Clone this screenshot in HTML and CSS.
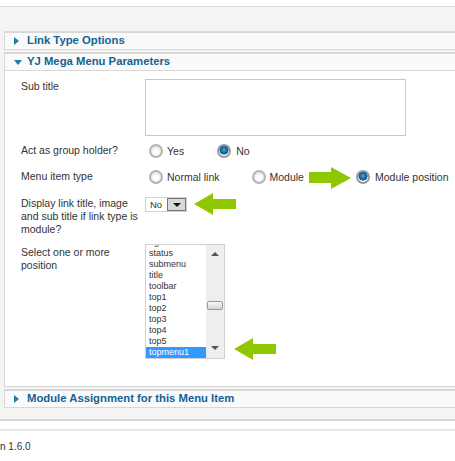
FILE: index.html
```html
<!DOCTYPE html>
<html lang="en">
<head>
  <meta charset="UTF-8">
  <title>YJ Mega Menu Parameters</title>
  <link rel="stylesheet" href="styles.css">
</head>
<body>
  <div class="content">
    <div class="panel">
      <h3 class="panel-title"><span class="caret-right"></span>Link Type Options</h3>
    </div>

    <div class="panel">
      <h3 class="panel-title"><span class="caret-down"></span>YJ Mega Menu Parameters</h3>
      <div class="panel-body">
        <div class="row row-subtitle">
          <div class="label label-subtitle">Sub title</div>
          <div class="textarea"></div>
        </div>

        <div class="row row-group">
          <div class="label">Act as group holder?</div>
          <div class="radios">
            <span class="radio"></span><span class="radio-text gap-yes">Yes</span>
            <span class="radio on"></span><span class="radio-text">No</span>
          </div>
        </div>

        <div class="row row-type">
          <div class="label">Menu item type</div>
          <div class="radios">
            <span class="radio"></span><span class="radio-text gap-normal">Normal link</span>
            <span class="radio"></span><span class="radio-text gap-module">Module</span>
            <span class="radio on"></span><span class="radio-text">Module position</span>
          </div>
        </div>

        <div class="row row-display">
          <div class="label">Display link title, image and sub title if link type is module?</div>
          <div class="select">
            <span class="select-value">No</span>
            <span class="select-button"><span class="tri-down"></span></span>
          </div>
        </div>

        <div class="row">
          <div class="label label-list">Select one or more position</div>
          <div class="listbox">
            <div class="list-items">
              <div class="list-item">right</div>
              <div class="list-item">status</div>
              <div class="list-item">submenu</div>
              <div class="list-item">title</div>
              <div class="list-item">toolbar</div>
              <div class="list-item">top1</div>
              <div class="list-item">top2</div>
              <div class="list-item">top3</div>
              <div class="list-item">top4</div>
              <div class="list-item">top5</div>
              <div class="list-item selected">topmenu1</div>
            </div>
            <div class="scrollbar">
              <span class="tri-up"></span>
              <span class="thumb"></span>
              <span class="tri-down small"></span>
            </div>
          </div>
        </div>
      </div>
    </div>

    <div class="panel">
      <h3 class="panel-title"><span class="caret-right"></span>Module Assignment for this Menu Item</h3>
    </div>
  </div>

  <div class="footer">
    <p class="version">n 1.6.0</p>
  </div>

  <!-- green callout arrows drawn on top of the screenshot -->
  <svg class="arrow arrow-type" width="42" height="22" viewBox="0 0 42 22"><path d="M0 5H22V0L42 11L22 22V16H0Z"/></svg>
  <svg class="arrow arrow-select" width="42" height="22" viewBox="0 0 42 22"><path d="M42 6H19V0L0 11L19 22V16H42Z"/></svg>
  <svg class="arrow arrow-list" width="42" height="22" viewBox="0 0 42 22"><path d="M42 6H19V0L0 11L19 22V16H42Z"/></svg>
</body>
</html>
```

FILE: styles.css
```css
/* General Styles */
html, body {
  margin: 0;
  height: 461px;
  overflow: hidden;
  background-color: #fff;
}

body {
  position: relative;
  padding-top: 6px;
  box-sizing: border-box;
  font-family: "Liberation Sans", Arial, sans-serif;
  font-size: 10.5px;
  color: #333;
}

/* Page Area */
.content {
  box-sizing: border-box;
  height: 415px;
  padding: 24px 0 0 4px;
  background-color: #f4f4f4;
  border-top: 1px solid #d8d8d8;
  border-bottom: 2px solid #d8d8d8;
  margin-right: -10px;
}

.footer {
  margin-top: 8px;
  border-top: 2px solid #e8e8e8;
}

.version {
  margin: 9px 0 0;
  font-size: 10px;
  line-height: 13px;
  color: #333;
}

/* Panels */
.panel {
  background-color: #fff;
  border: 1px solid #d8d8d8;
  border-width: 2px 1px 1px;
  margin-bottom: 2px;
}

.panel-title {
  display: flex;
  align-items: center;
  height: 15px;
  margin: 0;
  padding: 0 0 1px 9px;
  font-size: 11.3px;
  line-height: 15px;
  font-weight: bold;
  color: #146295;
  background-color: #fafafa;
}

.caret-right {
  width: 0;
  height: 0;
  margin-right: 8px;
  border-left: 5px solid #1b7fa8;
  border-top: 4px solid transparent;
  border-bottom: 4px solid transparent;
}

.caret-down {
  width: 0;
  height: 0;
  margin: 1px 5px 0 0;
  border-top: 5px solid #1b7fa8;
  border-left: 4px solid transparent;
  border-right: 4px solid transparent;
}

.panel-body {
  border-top: 1px solid #d8d8d8;
  height: 307px;
  padding-top: 8px;
}

/* Form Rows */
.row {
  display: flex;
  padding-left: 16px;
}

.label {
  width: 124px;
  line-height: 13px;
  flex-shrink: 0;
}

.label-subtitle {
  padding-top: 1px;
}

.label-list {
  padding-top: 2px;
}

.row-subtitle { height: 65px; }
.row-group { height: 26px; }
.row-type { height: 27px; }
.row-display { height: 47px; }

.textarea {
  width: 259px;
  height: 55px;
  background-color: #fff;
  border: 1px solid #c8c8c8;
}

.radios {
  display: flex;
  align-items: center;
  height: 13px;
}

.radio {
  width: 10px;
  height: 10px;
  margin-left: 4px;
  margin-right: 4px;
  border-radius: 50%;
  background: radial-gradient(circle at 50% 60%, #fff 30%, #d0d0d0 100%);
  border: 2px solid #b4b4b4;
  flex-shrink: 0;
}

.radio.on {
  margin-right: 5px;
  background: radial-gradient(circle at 50% 40%, #4aa6e0 0, #0f5d96 45%, #0f5d96 55%, #fff 62%);
  border-color: #9a9a9a;
}

.gap-yes { margin-right: 29px; }
.gap-normal { margin-right: 28px; }
.gap-module { margin-right: 48px; }

/* Select */
.select {
  display: flex;
  align-items: center;
  width: 40px;
  height: 13px;
  border: 1px solid #d0d0d0;
  background-color: #fff;
}

.select-value {
  flex: 1;
  padding-left: 4px;
  font-size: 9.5px;
}

.select-button {
  display: flex;
  align-items: center;
  justify-content: center;
  width: 17px;
  height: 11px;
  background-color: #d8d8d8;
  border: 1px solid #777;
}

.tri-down {
  width: 0;
  height: 0;
  border-top: 4px solid #111;
  border-left: 4px solid transparent;
  border-right: 4px solid transparent;
}

.tri-down.small {
  border-top-color: #555;
}

.tri-up {
  width: 0;
  height: 0;
  border-bottom: 4px solid #555;
  border-left: 4px solid transparent;
  border-right: 4px solid transparent;
}

/* List Box */
.listbox {
  display: flex;
  width: 78px;
  height: 113px;
  border: 1px solid #d0d0d0;
  background-color: #fff;
  overflow: hidden;
}

.list-items {
  flex: 1;
  margin-top: -8px;
}

.list-item {
  height: 11px;
  line-height: 11px;
  padding-left: 3px;
  font-size: 9px;
}

.list-item.selected {
  background-color: #3399ff;
  color: #fff;
}

.scrollbar {
  display: flex;
  flex-direction: column;
  align-items: center;
  width: 18px;
  box-sizing: border-box;
  padding: 7px 0 8px;
  background-color: #eee;
}

.thumb {
  width: 14px;
  height: 7px;
  margin: 45px 0 auto;
  background: linear-gradient(#fafafa, #d4d4d4);
  border: 1px solid #999;
  border-radius: 2px;
}

/* Callout Arrows */
.arrow {
  position: absolute;
  fill: #8fc800;
}

.arrow-type { left: 309px; top: 167px; }
.arrow-select { left: 194px; top: 193px; }
.arrow-list { left: 234px; top: 338px; }
```
